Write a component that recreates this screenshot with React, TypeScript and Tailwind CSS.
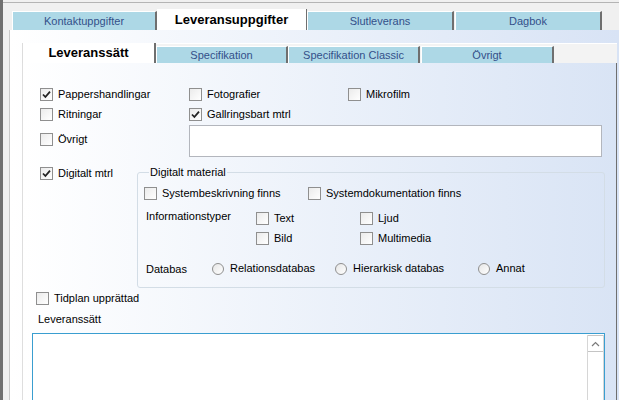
import React from "react";

type CheckProps = { label: string; checked?: boolean };

function Check({ label, checked }: CheckProps) {
  return (
    <label className="flex h-[13px] items-center whitespace-nowrap">
      <span className="flex h-[13px] w-[13px] shrink-0 items-center justify-center border border-[#8f8f8f] bg-linear-to-br from-[#ebebeb] to-white">
        {checked && (
          <svg width="11" height="11" viewBox="0 0 11 11">
            <path d="M2 5.5 L4.4 8 L9 2.6" fill="none" stroke="#222" strokeWidth="1.8" />
          </svg>
        )}
      </span>
      <span className="ml-[5px] leading-[15px]">{label}</span>
    </label>
  );
}

function Radio({ label }: { label: string }) {
  return (
    <label className="flex h-[13px] items-center whitespace-nowrap">
      <span className="h-[12px] w-[12px] shrink-0 rounded-full border border-[#8f8f8f] bg-linear-to-br from-[#e6e6e6] to-white" />
      <span className="ml-[6px] leading-[15px]">{label}</span>
    </label>
  );
}

function OuterTab({ label, selected, w }: { label: string; selected?: boolean; w: string }) {
  if (selected) {
    return (
      <div className={`${w} flex h-[21px] items-center justify-center border-r border-r-[#6f6f6f] bg-white text-[13px] font-bold text-black`}>
        {label}
      </div>
    );
  }
  return (
    <div className={`${w} flex h-[19px] items-center justify-center border-t border-l border-white border-r-[2px] border-r-[#6f6f6f] bg-[#add8e6] text-[11px] text-[#33508a]`}>
      {label}
    </div>
  );
}

function InnerTab({ label, selected, w }: { label: string; selected?: boolean; w: string }) {
  if (selected) {
    return (
      <div className={`${w} flex h-[20px] items-center justify-center border-l border-[#dcdcdc] border-r-[2px] border-r-[#6f6f6f] bg-white text-[13px] font-bold text-black`}>
        {label}
      </div>
    );
  }
  return (
    <div className={`${w} flex h-[17px] items-center justify-center border-t border-l border-white border-r-[2px] border-r-[#6f6f6f] bg-[#add8e6] text-[11px] text-[#33508a]`}>
      {label}
    </div>
  );
}

export default function App() {
  return (
    <div className="flex h-[400px] w-[619px] flex-col overflow-hidden border-l-[3px] border-l-[#707070] bg-[#f0f0f0] font-['Liberation_Sans',Arial,sans-serif] text-[11px] text-black">
      {/* top strip */}
      <div className="h-[9px] shrink-0">
        <div className="h-[3px] border-b border-[#b4b4b4]" />
      </div>

      {/* outer tabs */}
      <div className="flex h-[21px] shrink-0 items-end pl-[9px]">
        <OuterTab label="Kontaktuppgifter" w="w-[145px]" />
        <OuterTab label="Leveransuppgifter" selected w="w-[150px]" />
        <OuterTab label="Slutleverans" w="w-[147px]" />
        <div className="ml-[1px]">
          <OuterTab label="Dagbok" w="w-[147px]" />
        </div>
      </div>

      {/* outer panel */}
      <div className="ml-[6px] flex flex-1 flex-col border-l border-[#c9c9c9] bg-linear-to-r from-white to-[#d8e3f5] pl-[12px] pt-[13px]">
        {/* inner tabs */}
        <div className="flex h-[20px] w-[595px] shrink-0 items-end border-t border-white bg-[#f3f3f3]">
          <InnerTab label="Leveranssätt" selected w="w-[134px]" />
          <InnerTab label="Specifikation" w="w-[132px]" />
          <InnerTab label="Specifikation Classic" w="w-[132px]" />
          <div className="ml-[1px]">
            <InnerTab label="Övrigt" w="w-[133px]" />
          </div>
        </div>

        {/* inner panel */}
        <div className="w-[595px] flex-1 border-l border-[#dedede] border-r border-r-[#6f6f6f] bg-linear-to-r from-white to-[#d9e4f5] pl-[17px] pt-[25px]">
          <div className="flex h-[13px] items-center">
            <div className="w-[149px]">
              <Check label="Pappershandlingar" checked />
            </div>
            <div className="w-[159px]">
              <Check label="Fotografier" />
            </div>
            <Check label="Mikrofilm" />
          </div>

          <div className="mt-[7px] flex h-[13px] items-center">
            <div className="w-[149px]">
              <Check label="Ritningar" />
            </div>
            <Check label="Gallringsbart mtrl" checked />
          </div>

          <div className="mt-[4px] flex items-start">
            <div className="w-[149px] pt-[8px]">
              <Check label="Övrigt" />
            </div>
            <div className="h-[32px] w-[413px] border border-[#b3b6bd] bg-white" />
          </div>

          <div className="mt-[8px] flex items-start">
            <div className="w-[97px] pt-[2px]">
              <Check label="Digitalt mtrl" checked />
            </div>
            <fieldset className="w-[468px] rounded-[3px] border border-[#d3dde6] px-[6px] pb-[12px]">
              <legend className="ml-[5px] px-[1px] leading-[15px]">Digitalt material</legend>
              <div className="mt-[7px] flex h-[13px] items-center">
                <div className="w-[164px]">
                  <Check label="Systembeskrivning finns" />
                </div>
                <Check label="Systemdokumentation finns" />
              </div>
              <div className="mt-[12px] flex items-start">
                <div className="-mt-[3px] w-[112px] pl-[2px] leading-[15px]">Informationstyper</div>
                <div className="flex flex-col gap-[7px]">
                  <div className="flex h-[13px] items-center">
                    <div className="w-[104px]">
                      <Check label="Text" />
                    </div>
                    <Check label="Ljud" />
                  </div>
                  <div className="flex h-[13px] items-center">
                    <div className="w-[104px]">
                      <Check label="Bild" />
                    </div>
                    <Check label="Multimedia" />
                  </div>
                </div>
              </div>
              <div className="mt-[17px] flex h-[13px] items-center">
                <div className="w-[68px] pl-[2px] pt-[2px] leading-[15px]">Databas</div>
                <div className="w-[123px]">
                  <Radio label="Relationsdatabas" />
                </div>
                <div className="w-[143px]">
                  <Radio label="Hierarkisk databas" />
                </div>
                <Radio label="Annat" />
              </div>
            </fieldset>
          </div>

          <div className="-ml-[4px] mt-[4px] flex h-[13px] items-center">
            <Check label="Tidplan upprättad" />
          </div>

          <div className="-ml-[2px] mt-[7px] leading-[15px]">Leveranssätt</div>

          <div className="-ml-[8px] mt-[6px] flex h-[80px] w-[573px] justify-end border border-[#3a9ed0] bg-white pt-[1px]">
            <div className="h-full w-[17px] border-x border-[#d6d6d6] bg-white">
              <div className="flex h-[17px] items-center justify-center border border-x-0 border-[#c4c4c4]">
                <svg width="9" height="6" viewBox="0 0 9 6">
                  <path d="M1 5 L4.5 1.5 L8 5" fill="none" stroke="#7a7a7a" strokeWidth="1.2" />
                </svg>
              </div>
            </div>
          </div>
        </div>
      </div>
    </div>
  );
}
